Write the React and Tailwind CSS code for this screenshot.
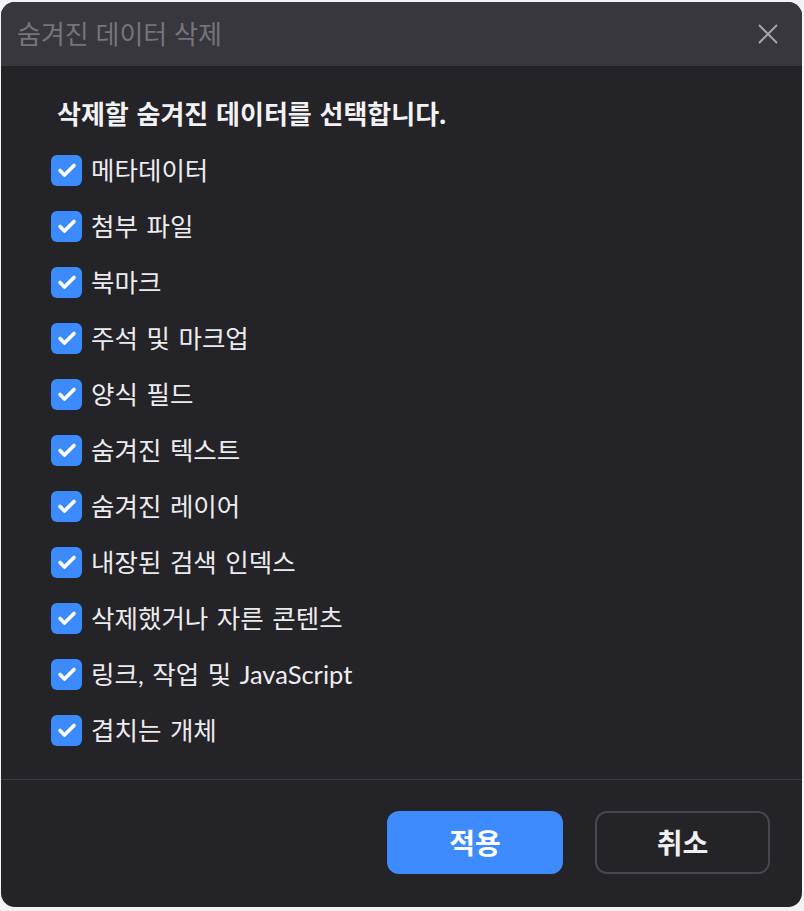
const items = [
    "메타데이터",
    "첨부 파일",
    "북마크",
    "주석 및 마크업",
    "양식 필드",
    "숨겨진 텍스트",
    "숨겨진 레이어",
    "내장된 검색 인덱스",
    "삭제했거나 자른 콘텐츠",
    "링크, 작업 및 JavaScript",
    "겹치는 개체",
];

const CheckBox = () => (
    <span className="w-[31px] h-[31px] rounded-[6px] bg-[#3b8bfc] flex items-center justify-center shrink-0">
        <svg width="20" height="20" viewBox="0 0 20 20" fill="none">
            <path
                d="M3 10.5 L7.5 15 L17 5.5"
                stroke="#ffffff"
                strokeWidth="3.6"
                strokeLinecap="round"
                strokeLinejoin="round"
            />
        </svg>
    </span>
);

const App = () => {
    return (
        <div
            className="w-[804px] h-[911px] bg-[#f3f3f5] pt-[2px] pl-[1px]"
            style={{ fontFamily: '"Noto Sans", "Noto Sans CJK KR", sans-serif' }}
        >
            <div className="w-[801px] h-[905px] rounded-[14px] overflow-hidden flex flex-col bg-[#242328]">
                {/* 헤더 */}
                <div className="h-[64px] bg-[#38373e] flex items-center justify-between pl-[16px] pr-[24px] shrink-0">
                    <span className="text-[26px] text-[#75747b]">숨겨진 데이터 삭제</span>
                    <button className="w-[20px] h-[20px] flex items-center justify-center">
                        <svg width="20" height="20" viewBox="0 0 20 20" fill="none">
                            <path
                                d="M1 1 L19 19 M19 1 L1 19"
                                stroke="#a3a3ad"
                                strokeWidth="2"
                            />
                        </svg>
                    </button>
                </div>

                {/* 본문 */}
                <div className="flex-1 pt-[20px] pl-[50px]">
                    <div className="h-[56px] flex items-center pl-[6px]">
                        <h2 className="text-[26px] font-bold text-[#f2f2f4] [word-spacing:1px]">
                            삭제할 숨겨진 데이터를 선택합니다.
                        </h2>
                    </div>
                    {items.map((label) => (
                        <label key={label} className="h-[56px] flex items-center gap-[9px]">
                            <CheckBox />
                            <span className="text-[25.5px] text-[#ececef] [word-spacing:2px] font-[Lato,'Noto_Sans_CJK_KR',sans-serif]">
                                {label}
                            </span>
                        </label>
                    ))}
                </div>

                {/* 하단 */}
                <div className="h-[128px] border-t border-[#3a393f] flex items-start justify-end gap-[32px] pt-[31px] pr-[32px] shrink-0">
                    <button className="w-[176px] h-[63px] rounded-[12px] bg-[#3d8bfd] text-white text-[28px] font-bold">
                        적용
                    </button>
                    <button className="w-[175px] h-[63px] rounded-[12px] border-2 border-[#48474d] text-[#f0f0f2] text-[28px] font-bold">
                        취소
                    </button>
                </div>
            </div>
        </div>
    );
};

export default App;
